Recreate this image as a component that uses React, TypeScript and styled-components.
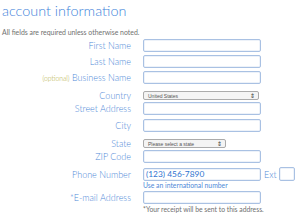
import React from 'react';
import styled, { createGlobalStyle } from 'styled-components';

const GlobalStyle = createGlobalStyle`
  body {
    margin: 0;
    background: #ffffff;
    font-family: Lato, 'Open Sans', sans-serif;
  }
`;

type RowProps = { $h: number; $mt: number };

export default function App() {
  return (
    <Page>
      <GlobalStyle />
      <Title>account information</Title>
      <Note>All fields are required unless otherwise noted.</Note>
      <Form>
        <Row $h={13} $mt={0}>
          <Label>First Name</Label>
          <Input />
        </Row>
        <Row $h={13} $mt={3}>
          <Label>Last Name</Label>
          <Input />
        </Row>
        <Row $h={13} $mt={3}>
          <Label>
            <Optional>(optional)</Optional> Business Name
          </Label>
          <Input />
        </Row>
        <Row $h={11} $mt={6}>
          <Label>Country</Label>
          <Select $w={116}>
            <span>United States</span>
            <Arrows>⇕</Arrows>
          </Select>
        </Row>
        <Row $h={13} $mt={1}>
          <Label>Street Address</Label>
          <Input />
        </Row>
        <Row $h={13} $mt={4}>
          <Label>City</Label>
          <Input />
        </Row>
        <Row $h={10} $mt={6}>
          <Label>State</Label>
          <Select $w={83}>
            <span>Please select a state</span>
            <Arrows>⇕</Arrows>
          </Select>
        </Row>
        <Row $h={13} $mt={2}>
          <Label>ZIP Code</Label>
          <Input />
        </Row>
        <Row $h={13} $mt={4}>
          <Label>Phone Number</Label>
          <PhoneCell>
            <Input $filled defaultValue="(123) 456-7890" />
            <ExtLabel>Ext</ExtLabel>
            <ExtInput />
          </PhoneCell>
        </Row>
        <Help $blue>Use an international number</Help>
        <Row $h={13} $mt={2}>
          <Label>*E-mail Address</Label>
          <Input />
        </Row>
        <Help>*Your receipt will be sent to this address.</Help>
      </Form>
    </Page>
  );
}

const Page = styled.div`
  width: 300px;
  height: 219px;
  overflow: hidden;
  padding: 0 0 0 2px;
  box-sizing: border-box;
`;

const Title = styled.h1`
  margin: 0;
  padding-top: 2px;
  font-family: Lato, sans-serif;
  font-weight: 300;
  font-size: 14.4px;
  line-height: 17px;
  color: #3d82da;
`;

const Note = styled.p`
  margin: 9px 0 0 0;
  font-size: 6.9px;
  line-height: 8px;
  color: #707070;
`;

const Form = styled.div`
  margin-top: 3px;
  display: flex;
  flex-direction: column;
`;

const Row = styled.div<RowProps>`
  display: grid;
  grid-template-columns: 129px 1fr;
  column-gap: 12px;
  align-items: center;
  height: ${p => p.$h}px;
  margin-top: ${p => p.$mt}px;
`;

const Label = styled.div`
  text-align: right;
  font-size: 9px;
  font-weight: 300;
  line-height: 11px;
  color: #4f8ad8;
  white-space: nowrap;
`;

const Optional = styled.span`
  font-size: 6.8px;
  color: #b0ab35;
`;

const Input = styled.input<{ $filled?: boolean }>`
  box-sizing: border-box;
  width: 118px;
  height: 13px;
  padding: 0 2px;
  border: 1px solid #a9c1e3;
  border-radius: 2px;
  box-shadow: inset 0 0 0 0.5px #dce6f4;
  font-family: Lato, sans-serif;
  font-size: 8.4px;
  color: #2f74d0;
  outline: none;
  background: #ffffff;
`;

const Select = styled.div<{ $w: number }>`
  box-sizing: border-box;
  width: ${p => p.$w}px;
  height: 9px;
  display: flex;
  align-items: center;
  justify-content: space-between;
  padding: 0 3px 0 4px;
  border: 1px solid #ababab;
  border-radius: 2px;
  background: #f4f4f4;
  font-family: 'Liberation Sans', sans-serif;
  font-size: 5px;
  color: #555555;
`;

const Arrows = styled.span`
  font-size: 6px;
  line-height: 6px;
  color: #333333;
`;

const PhoneCell = styled.div`
  display: flex;
  align-items: center;
`;

const ExtLabel = styled.span`
  margin-left: 3px;
  font-size: 9px;
  font-weight: 300;
  color: #4f8ad8;
`;

const ExtInput = styled(Input)`
  width: 16px;
  height: 14px;
  margin-left: 2px;
`;

const Help = styled.div<{ $blue?: boolean }>`
  margin: 2px 0 0 141px;
  font-size: 6.8px;
  line-height: 7px;
  color: ${p => (p.$blue ? '#4f8ad8' : '#707070')};
  white-space: nowrap;
`;
